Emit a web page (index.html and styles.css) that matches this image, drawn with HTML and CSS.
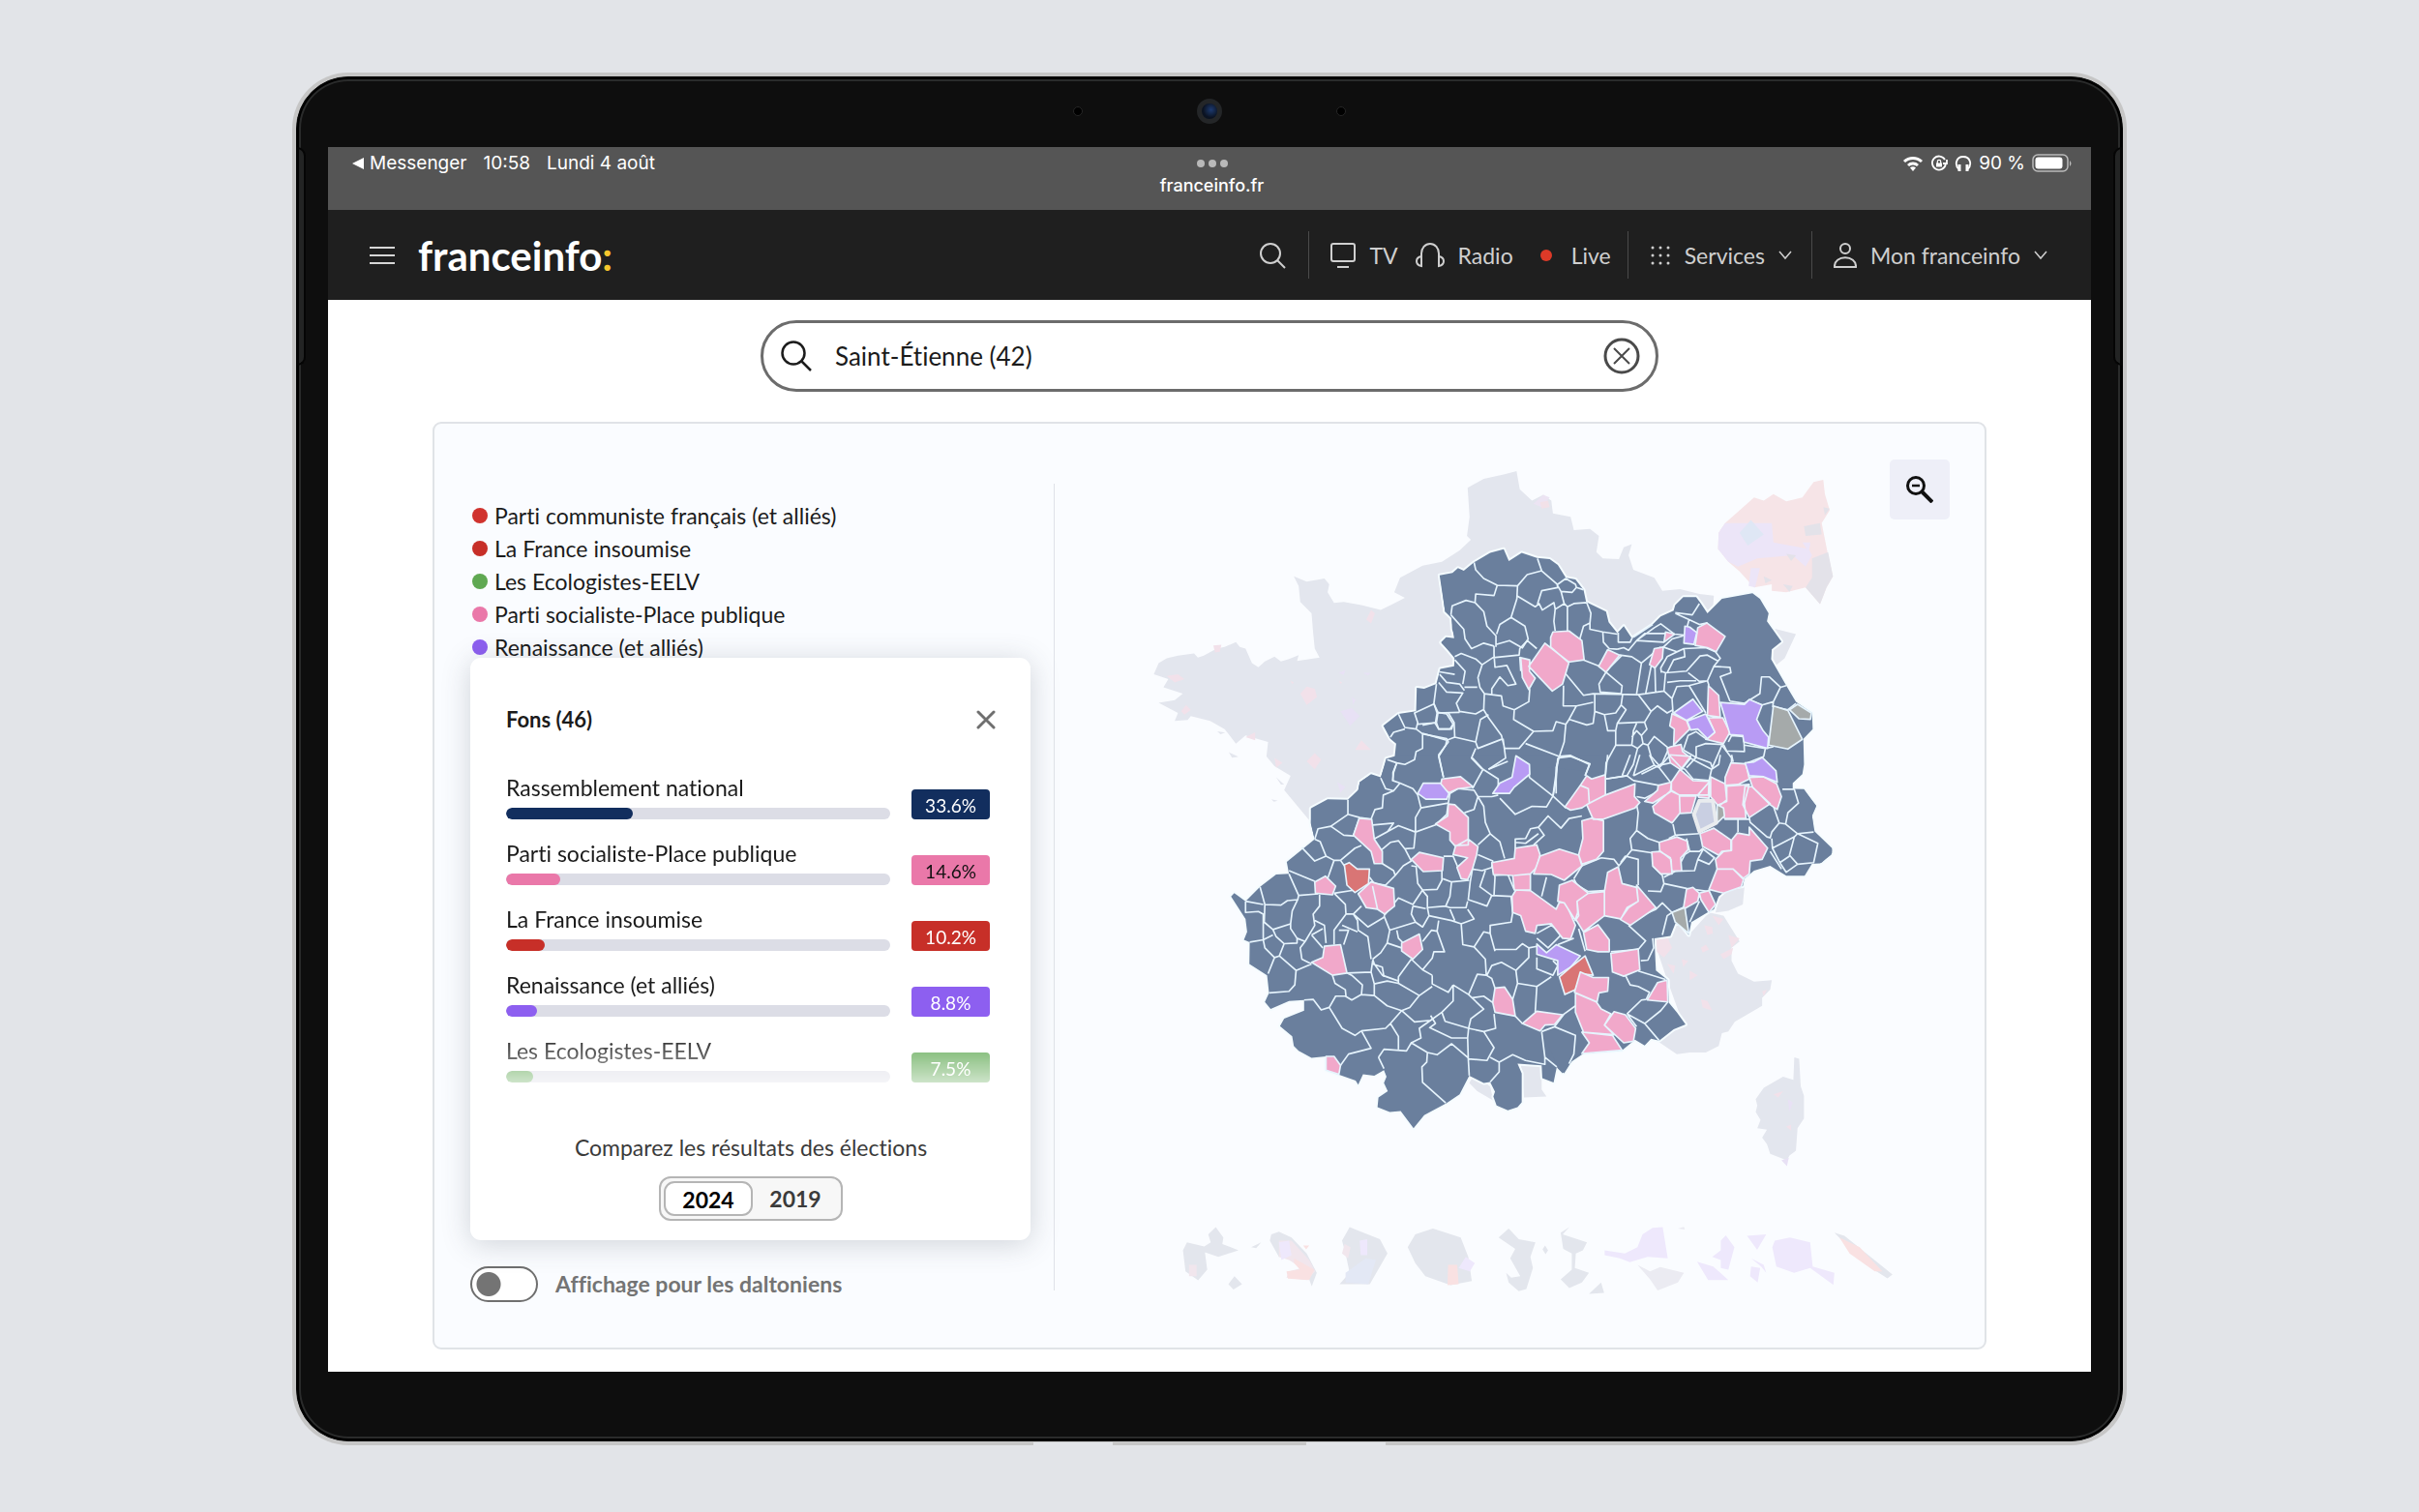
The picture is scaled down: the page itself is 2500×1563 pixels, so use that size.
FILE: index.html
```html
<!DOCTYPE html>
<html lang="fr">
<head>
<meta charset="utf-8">
<meta name="viewport" content="width=device-width, initial-scale=1">
<title>franceinfo - résultats des élections</title>
<link rel="stylesheet" href="styles.css">
</head>
<body>
<div class="tablet">
  <span class="edge edge-left"></span><span class="edge edge-right"></span>
  <span class="seam seam-left"></span><span class="seam seam-right"></span>
  <div class="bezel"><i class="mic"></i><i class="camera"></i><i class="mic"></i></div>
  <div class="screen">
    <div class="status">
      <div class="status-left">
        <svg width="13" height="14" viewBox="0 0 13 14"><path d="M13 1v12L1 7z" fill="#fff"/></svg>
        <span class="back">Messenger</span><span class="time">10:58</span><span>Lundi 4 août</span>
      </div>
      <div class="status-mid"><svg width="34" height="10" viewBox="0 0 34 10" fill="#b9b9b9"><circle cx="5" cy="5" r="4"/><circle cx="17" cy="5" r="4"/><circle cx="29" cy="5" r="4"/></svg><span>franceinfo.fr</span></div>
      <div class="status-right">
        <svg width="22" height="18" viewBox="0 0 22 18" fill="none" stroke="#fff" stroke-width="3"><path d="M2 7a13 13 0 0 1 18 0M6 11a7.500 7.500 0 0 1 10 0"/><path d="M8 13.500a4 4 0 0 1 6 0L11 17z" fill="#fff" stroke="none"/></svg>
        <svg width="18" height="18" viewBox="0 0 18 18" fill="none" stroke="#fff" stroke-width="1.800"><path d="M15 5a7 7 0 1 0 .8 5M17 5v4h-4"/><path d="M6 8.500h6v4H6z" fill="#fff" stroke="none"/><path d="M7.300 9V7a1.700 1.700 0 0 1 3.400 0v2" stroke-width="1.200"/></svg>
        <svg width="18" height="18" viewBox="0 0 18 18" fill="none" stroke="#fff" stroke-width="1.800"><path d="M4.500 15C0 11 1 2 9 2s9 9 4.500 13"/><path d="M5 10v7M13 10v7" stroke-width="3"/></svg>
        <span>90 %</span>
        <svg width="42" height="20" viewBox="0 0 42 20"><rect x="1" y="1" width="36" height="17" rx="5" fill="none" stroke="#bbb" stroke-width="1.500"/><rect x="3.500" y="3.500" width="28" height="12" rx="3" fill="#fff"/><path d="M39 7v6q3-3 0-6" fill="#bbb"/></svg>
      </div>
    </div>
    <header class="nav">
      <button class="plain menu" aria-label="Menu"><svg width="26" height="20" viewBox="0 0 26 20" stroke="#d6d6d6" stroke-width="2"><path d="M0 2h26M0 10h26M0 18h26"/></svg></button>
      <a class="logo" href="#">franceinfo<span>:</span></a>
      <nav class="links">
        <button class="plain find" aria-label="Rechercher"><svg width="28" height="28" viewBox="0 0 28 28" fill="none" stroke="#cfcfcf" stroke-width="2"><circle cx="12" cy="12" r="10"/><path d="M19 19l8 8"/></svg></button>
        <div class="group media">
          <a class="tv" href="#"><svg width="26" height="28" viewBox="0 0 26 28" fill="none" stroke="#cfcfcf" stroke-width="2"><rect x="1" y="2" width="24" height="18" rx="2"/><path d="M7 26h12"/></svg>TV</a>
          <a class="radio" href="#"><svg width="30" height="28" viewBox="0 0 30 28" fill="none" stroke="#cfcfcf" stroke-width="2"><path d="M6 25V12a9 10 0 0 1 18 0v13"/><path d="M6 15q-5 1-5 5t5 5zM24 15q5 1 5 5t-5 5z"/></svg>Radio</a>
          <a class="live" href="#"><i></i>Live</a>
        </div>
        <div class="group services"><a href="#"><svg width="22" height="22" viewBox="0 0 22 22" stroke="#cfcfcf" stroke-width="3" stroke-linecap="round"><path d="M3 3h0M11 3h0M19 3h0M3 11h0M11 11h0M19 11h0M3 19h0M11 19h0M19 19h0"/></svg>Services<svg class="chev" width="14" height="10" viewBox="0 0 14 10" fill="none" stroke="#cfcfcf" stroke-width="1.500"><path d="M1 1l6 7 6-7"/></svg></a></div>
        <div class="group account"><a href="#"><svg width="24" height="26" viewBox="0 0 24 26" fill="none" stroke="#cfcfcf" stroke-width="2"><circle cx="12" cy="6" r="5"/><path d="M1 25c-1-13 23-13 22 0z"/></svg>Mon franceinfo<svg class="chev" width="14" height="10" viewBox="0 0 14 10" fill="none" stroke="#cfcfcf" stroke-width="1.500"><path d="M1 1l6 7 6-7"/></svg></a></div>
      </nav>
    </header>
    <main>
      <form class="search">
        <svg width="32" height="32" viewBox="0 0 32 32" fill="none" stroke="#1c1c1c" stroke-width="2.500"><circle cx="13" cy="13" r="11.500"/><path d="M21 21l10 10"/></svg>
        <input type="text" aria-label="Commune" value="Saint-Étienne (42)">
        <button type="button" class="plain" aria-label="Effacer"><svg width="38" height="38" viewBox="0 0 38 38" fill="none" stroke="#4a4a4a" stroke-width="3"><circle cx="19" cy="19" r="17"/><path d="M11 11l16 16M27 11L11 27" stroke-width="2"/></svg></button>
      </form>
      <section class="card">
        <div class="side">
          <ul class="legend">
            <li class="pcf">Parti communiste français (et alliés)</li>
            <li class="lfi">La France insoumise</li>
            <li class="eco">Les Ecologistes-EELV</li>
            <li class="ps">Parti socialiste-Place publique</li>
            <li class="ren">Renaissance (et alliés)</li>
          </ul>
          <div class="popup">
            <div class="popup-head"><h2>Fons (46)</h2><button class="plain" aria-label="Fermer"><svg width="20" height="20" viewBox="0 0 20 20" stroke="#6f6f6f" stroke-width="3" stroke-linecap="round"><path d="M2 2l16 16M18 2L2 18"/></svg></button></div>
            <ul class="results">
              <li class="rn"><div><p>Rassemblement national</p><div class="bar"><span style="width:33.1%"></span></div></div><b>33.6%</b></li>
              <li class="ps"><div><p>Parti socialiste-Place publique</p><div class="bar"><span style="width:14.1%"></span></div></div><b>14.6%</b></li>
              <li class="lfi"><div><p>La France insoumise</p><div class="bar"><span style="width:10.2%"></span></div></div><b>10.2%</b></li>
              <li class="ren"><div><p>Renaissance (et alliés)</p><div class="bar"><span style="width:8%"></span></div></div><b>8.8%</b></li>
              <li class="eco"><div><p>Les Ecologistes-EELV</p><div class="bar"><span style="width:7%"></span></div></div><b>7.5%</b></li>
            </ul>
            <p class="compare">Comparez les résultats des élections</p>
            <div class="years"><button class="on">2024</button><button>2019</button></div>
          </div>
          <label class="switch"><input type="checkbox"><span>Affichage pour les daltoniens</span></label>
        </div>
        <div class="map">
          <svg viewBox="1089 437 963 957" role="img" aria-label="Carte de France des résultats">
            <defs>
              <g id="zone">
                <path transform="translate(1150 440) scale(.33333)" d="M1015 463 1030 575 1050 595 1058 658 1035 655 1018 672 1060 715 1058 745 1015 753 1003 800 965 815 942 812 940 885 885 893 838 930 860 970 878 985 872 1040 848 1035 830 1090 800 1080 765 1105 760 1130 730 1160 613 1187 613 1230 625 1285 1260 1285 1260 480Z"/>
                <path transform="translate(1470 460) scale(.33333)" d="M53 402 93 395 110 380 128 388 160 362 210 332 252 321 268 358 308 332 355 348 395 352 420 370 445 410 475 415 500 447 508 485 570 515 578 548 605 582 625 560 650 598 715 555 740 530 780 512 785 495 810 470 850 470 865 490 885 520 930 475 1025 458 1048 475 1075 520 1070 545 1115 608 1085 632 1083 663 1130 745 1160 795 1210 830 1212 880 1183 910 1185 990 1180 1020 1150 1048 1150 1068 1185 1070 1223 1118 1210 1145 1215 1200 1272 1255 1270 1270 1235 1297 1000 1297 980 1320 100 1320 100 660 58 610 73 595 102 602 92 570 90 530 70 515Z"/>
                <path transform="translate(1240 780) scale(.33333)" d="M577 12 560 72 530 62 495 85 490 110 458 140 395 138 345 165 343 215 355 262 268 333 275 370 235 372 185 410 140 455 105 430 95 440 140 510 145 550 135 575 153 582 152 650 207 685 213 740 200 768 218 790 275 765 322 762 322 795 260 820 247 843 285 875 290 905 305 920 345 942 390 937 390 980 433 995 482 1012 490 1025 505 993 540 997 570 980 578 1000 570 1020 582 1045 553 1065 550 1095 588 1110 622 1107 662 1160 695 1120 765 1082 805 1055 835 997 880 1020 900 1017 915 1047 910 1062 920 1090 955 1105 985 1095 998 1080 998 990 985 960 1060 965 1062 1005 1097 1018 1107 970 1130 990 1155 950 1187 925 1260 890 1260 0 620 0Z"/>
                <path transform="translate(1600 780) scale(.33333)" d="M0 40 730 105 795 107 833 160 820 190 828 238 882 290 882 305 850 335 820 338 797 376 740 376 690 345 640 360 610 385 605 408 560 415 530 440 515 480 495 490 445 520 437 560 410 525 395 525 380 563 330 570 335 670 372 700 375 770 400 800 427 838 390 853 345 888 320 882 300 903 270 885 230 918 110 928 70 955 45 990 30 975 0 900Z"/>
              </g>
            </defs>
            <g class="faint">
              <path transform="translate(1150 440) scale(.33333)" d="M125 770 140 735 165 720 200 712 250 705 262 718 280 712 320 690 345 685 380 670 392 685 410 690 430 735 450 748 470 730 500 715 520 730 545 722 575 710 570 728 640 718 625 690 620 640 615 580 580 545 575 495 560 465 600 482 655 472 670 490 665 515 685 548 715 545 770 555 830 570 870 550 905 532 872 515 890 470 960 432 1020 420 1075 385 1110 352 1098 340 1106 280 1100 190 1150 162 1215 148 1252 138 1262 195 1300 230 1335 212 1360 230 1365 270 1420 280 1430 322 1480 318 1508 340 1500 390 1520 410 1570 412 1585 375 1610 365 1600 400 1615 445 1680 470 1705 510 1760 505 1820 520 1865 525 1860 600 1650 720 1000 1100 607 1222 580 1190 530 1130 550 1085 500 1055 475 1025 480 980 410 960 380 985 345 940 300 915 240 900 230 912 190 915 200 890 140 858 190 850 215 830 155 810 170 785Z M2055 628 2120 645 2085 720 2058 742 2040 725Z M322 947l25 4-15 5ZM358 1012l30 14-20 3ZM505 1090l25 22-10 0ZM490 1158l20 5-12 3Z"/>
              <path transform="translate(1600 780) scale(.33333)" d="M325 565 410 515 437 560 500 490 545 500 595 580 570 600 570 640 590 680 640 705 695 700 690 730 665 755 665 780 580 830 560 860 540 865 530 905 490 925 440 925 400 930 340 890 420 838 370 700ZM520 490 530 450 560 412 610 410 605 465 560 485ZM765 940 780 945 785 1030 795 1060 795 1130 775 1160 770 1230 750 1245 742 1260 690 1240 680 1210 665 1190 680 1165 650 1160 660 1135 645 1110 650 1090 645 1070 670 1035 730 1000 762 1010ZM-230 995-180 1030-170 1075-220 1045-245 1020ZM-85 960-20 965-20 1040-5 1062-75 1065Z"/>
            </g>
            <g class="tint">
              <path class="tp" transform="translate(1150 440) scale(.33333)" d="M785 600 800 570 812 580 800 612ZM310 680 335 678 330 700 315 702ZM165 775 200 770 220 785 190 795ZM225 865 240 880 220 895 210 885ZM580 830 600 808 625 815 632 840 600 865ZM410 965 440 950 440 975ZM500 1030 525 1045 505 1060ZM600 1040 625 1015 645 1035 625 1065ZM750 1005 770 975 800 1005ZM550 790l10 5-5 5ZM700 790l10 5-5 5Z"/>
              <path class="tv2" transform="translate(1150 440) scale(.33333)" d="M705 885 740 875 765 900 735 930ZM695 1105 720 1120 705 1138ZM740 840l12 10-8 14ZM700 765l20-8-5 15ZM775 765l25 0-10 8Z"/>
              <path class="tp" transform="translate(1600 780) scale(.33333)" d="M335 575 370 565 385 600 360 630 335 610ZM485 530 510 535 512 555 495 560ZM510 500 545 510 530 530ZM560 560 595 570 570 600ZM535 620 575 600 570 620 545 635ZM475 600 490 590 500 605 480 615ZM415 635 435 640 420 660ZM440 670 465 685 440 700ZM475 760 495 765 510 795 480 785ZM700 1055 730 1045 715 1065ZM370 650l25 5-5 25ZM665 735l15-5-10 20ZM740 1155l15-5 0 18Z"/>
              <path class="tv2" transform="translate(1600 780) scale(.33333)" d="M725 1260 748 1252 742 1278ZM745 1070l15 10-10 30Z"/>
              <g transform="translate(1470 460) scale(.33333)">
                <path fill="#f6e4e7" d="M940 240 985 200 1030 160 1060 170 1090 150 1130 172 1180 160 1215 112 1245 105 1250 150 1265 200 1240 240 1258 330 1275 405 1255 440 1235 492 1190 440 1130 455 1085 450 1085 430 1030 440 985 390 950 360 918 320 920 270Z"/>
                <path fill="#ece5f8" d="M920 270 940 240 1085 240 1090 300 1200 320 1210 340 1190 375 1150 340 1040 350 980 375 950 360 918 320ZM1020 380l28 0-15 60-20-5ZM1180 300l25 0-5 30Z"/>
                <path fill="#dfe7f5" d="M985 270l35-40 40 45-50 35Z"/>
                <path fill="#e3e2e9" d="M1185 250l50-10 5 35-50 5ZM1245 190l20 5-15 20ZM1210 350l50-20 15 75-20 35-20 52-45-52 20-30ZM1130 335l30 5-15 18ZM1120 430l30 5-10 18ZM1060 405l25 12-20 10Z"/>
                <path fill="#ece4f3" d="M345 180 375 152 395 160 370 190Z"/>
                <path fill="#f2e1e8" d="M365 175l25-5 5 20-25 5Z"/>
              </g>
              <g transform="translate(1180 1200) scale(.523 .33333)">
                <path fill="#e3e6ed" d="M88 255 122 268 128 340 110 373 85 345 80 280ZM145 208 160 240 158 260 190 280 150 300 122 285 120 270 135 255 130 230ZM182 360 197 385 180 402 170 385ZM215 270l20-15-10 18ZM255 230 270 222 295 240 325 290 345 350 335 392 330 370 300 300 270 300 252 250ZM410 208 470 245 485 290 450 385 390 385 410 350 402 290 395 250ZM575 212 630 240 645 300 652 375 610 388 560 360 540 320 525 270 540 230ZM725 212 745 245 778 255 768 300 773 335 760 400 745 407 725 380 720 350 730 365 748 360 728 305 738 275 705 240ZM797 265l6 15-5 12-6-15ZM845 208 832 230 880 255 872 280 858 290 856 335 884 350 870 380 845 397 828 370 850 340 850 290 833 275 828 225ZM908 380 914 412 884 415ZM1370 225l20 10 95 120-10 12-45-45Z"/>
                <path fill="#f1e6ed" d="M92 325h15v35H92ZM270 250 295 250 330 310 342 345 325 372 285 365 290 345 315 335 290 310 270 300ZM400 260l12 10-5 35-12-15Z"/>
                <path fill="#f9e1e2" d="M300 305 340 340 330 372 288 368 285 345 312 340 300 320ZM605 325h18l3 60-22 3ZM1380 240 1420 270 1465 345 1450 345 1400 290ZM318 265h12l-6 12Z"/>
                <path fill="#eee8fc" d="M270 255l20-5 5 45-20 15ZM430 250l15-5v50h-13ZM640 300l18 20-10 25-22-10ZM1030 208 1040 305 1000 300 965 317 945 305 915 295 915 280 955 290 980 270 990 230 1010 210ZM1155 233 1172 270 1160 340 1145 335 1145 310 1128 300 1145 280 1145 250ZM1098 315 1130 330 1160 372 1120 372ZM1197 235l38-5-18 48ZM1252 250 1282 240 1322 255 1327 330 1370 350 1368 387 1322 335 1290 350 1255 330 1247 270ZM1205 330l18 5-5 45-15-20ZM1195 325l10-3ZM1205 305l25 20 5 25-10-20Z"/>
                <path fill="#ebebf2" d="M980 325 1005 345 1025 332 1072 350 1060 380 1020 405 1005 370ZM1060 212l12-5 2 8Z"/>
                <path fill="#e3e8f5" d="M402 350l40-45 20 5-15 75-45-5Z"/>
              </g>
            </g>
            <use href="#zone" class="halo"/><use href="#zone" class="solid"/>
            <g transform="translate(1150 440) scale(.33333)" class="lines"><path d="M885 893 905 935 940 940 945 920 935 890 995 862 1003 800M860 965 870 950 905 940M940 940 960 955 960 1000 940 1010 935 1035 905 1050 880 1045 850 1035M995 862 1008 888 1003 920 945 925M1008 888 1035 893 1055 925 1050 940 1010 940 1003 920M960 955 1035 970 1040 980 1010 1020 1025 1090M880 1045 868 1075 868 1100"/></g>
            <g transform="translate(1470 460) scale(.33333)" class="lines">
              <path d="M160 362 165 385 190 412 232 433 295 435 325 400 370 388 357 350M232 433 222 465 165 460 163 487M88 525 92 497 135 480 163 487 190 515 200 560 228 590 228 625M88 525 128 570 132 600 152 630 190 613 222 622M295 435 293 475 275 533 240 555 230 585M275 533 318 560 328 600 310 628 270 605 228 617M295 467 350 500 362 490 372 510 408 487 412 507 408 545 412 575M357 492 370 450 420 440 418 430 370 388M420 430 445 412 475 430 478 440 465 455 430 452 420 435M430 452 440 490 413 507M440 490 450 500 450 575M450 500 470 490 510 487M478 440 500 447M510 487 523 520 520 550 500 560 487 605M520 550 520 570 560 578 605 585M560 578 562 610 580 630 605 632M608 580 608 610 645 610 652 595M605 632 625 627 640 635 665 605 720 565 740 553 783 585 815 588 828 540 785 520M665 605 690 583 755 583M750 610 665 605M655 595 715 555M612 650 650 655 680 675 740 625M500 665 550 685 570 703 620 745 617 770 552 765 548 740 570 703M620 650 585 685 570 703M442 705 500 775 530 770 670 773 750 762 755 705M680 675 665 770M710 685 693 770M722 690 724 765M740 700 755 705 820 700 862 653 885 650 920 670M742 705 740 690 760 655 812 630 880 627 910 640 925 660 905 685 885 730 860 732 825 705M760 735 800 730 850 730M748 625 790 640 812 630 815 655 780 665 760 705M810 590 775 600 745 628M828 540 860 555 885 550M860 490 838 525 785 518M905 685 955 688 958 705 925 717 955 793M890 745 885 730 828 745 880 830M828 745 790 748 775 785 778 830M750 762 775 785M955 793 1000 800 1048 770 1053 718 1078 718 1112 750 1090 795 1055 805 1015 790M1112 750 1130 745M1090 795 1088 810 1135 820 1160 800M950 920 960 900 998 903 1000 950 945 948 935 928M1000 930 1065 940 1090 935M1065 940 1060 965 1010 985"/>
              <path d="M100 655 120 645 165 662 185 680 172 720 178 750 192 770M185 680 218 658 300 650 302 630 325 605 355 630M222 622 222 650 225 688 262 682 290 740 265 745 240 718 215 755 215 775M192 770 245 777 250 808 285 820 330 795 333 755M302 655 305 700M285 820 283 850 345 887 405 885 415 857 445 865M192 770 190 820 205 845 245 900 255 940 300 940 345 887M438 745 437 808 478 808 530 797M478 808 455 850 445 865 440 920 425 965 320 925M535 770 535 825 530 862 510 867 457 850M535 825 565 835 575 885 600 885 600 930 570 985 568 1025M565 835 600 830 617 805 622 770M617 805 632 820 605 862 600 885M605 862 690 858 710 825 670 773M710 825 730 808 760 830 778 820M600 930 650 930 655 885 665 862M650 930 668 940 685 925 680 900 665 885 650 905M690 860 697 880 680 900M685 925 700 930 720 903 765 940 745 985 735 993 710 965 700 930M668 940 655 990 635 1025 568 1035M735 993 680 1020M735 993 770 985M53 710 75 735 115 740 130 760M50 735 75 765 125 768 105 800 115 825M53 702 100 710M100 665 132 700 125 740M130 750 170 750M115 825 165 833 188 820M35 800 45 830 115 828M45 830 40 860 0 868M80 830 98 860 85 880 50 880 38 860M98 860 100 905 165 920 180 850 205 835M0 893 75 915 100 905M75 915 72 930 50 965 65 1030M165 920 172 940 250 910M165 940 152 970 185 1005M250 910 258 970 205 1005M425 965 415 1000 415 1080M425 965 460 962 518 990 505 1025M810 945 825 900 850 888 880 910M810 945 850 968 850 935 880 925 935 928M850 968 895 985 900 1000 930 930 960 970 960 985M850 968 820 1000"/>
            </g>
            <g transform="translate(1240 780) scale(.33333)" class="lines">
              <path d="M610 25 600 55 597 80 620 88M560 72 575 105 600 112 620 88 660 105 675 125 685 165 668 195 668 238M600 112 568 125 565 165 542 170 530 200M458 140 458 185 495 195 530 200M458 185 405 222 365 230 355 262M405 222 445 250 475 252 493 200M355 262 372 270 390 315 355 330 315 288M390 315 415 328 435 328 480 290 500 282M415 328 395 385M435 328 447 345M275 360 355 393M535 218 600 212 580 240 538 262M538 262 615 220 668 240M563 295 590 272 615 267 635 292 663 290 668 240 730 218 765 185 770 150 685 165M635 292 655 330 630 345 605 375M565 338 600 360 605 375 575 405 540 400 525 380M655 345 670 347 675 400 690 420 660 465 615 445 570 500M750 360 750 390 735 418 690 420M770 150 775 120 800 105 850 110 862 130 850 170 820 180M862 130 880 160 885 210 900 245 862 280M900 245 930 270 945 322M862 130 905 130 925 125M845 105 878 45 845 10M878 45 925 75 925 95M895 45 955 20M930 135 978 185 1030 160 1075 162 1095 128 1022 70 1020 35M1095 128 1110 20M1095 128 1135 165M978 290 978 262 1010 260 1025 230 1050 225 1080 190 1120 228 1145 198 1185 190M1050 225 1068 250 1035 280M978 272 1010 275 1050 245M862 310 908 330 905 350 875 360 845 355M845 355 838 395 832 450 890 470 905 437 868 410 885 360M908 355 915 380 912 435M905 437 965 440 970 490 965 520 900 530 900 555 915 610M915 375 955 372 975 420M755 315 785 315 800 350M753 385 780 395 835 390M780 395 775 440 762 470 705 475 705 440 690 422M830 455 825 475 775 475 760 470M705 475 710 500 780 515 810 525 850 510 830 480M775 480 790 515M660 470 700 478M660 470 655 495 668 520 588 545M668 520 690 535 710 500M740 515 735 548 758 612 725 612 720 632 690 668M690 580 718 545 735 548M588 545 580 585 560 615 535 635M570 500 588 545M610 545 615 570 630 585M580 585 625 600M810 525 815 590 850 597 880 550 900 555M850 597 885 635 888 685 905 695 915 725M915 605 980 605 1000 587 1020 600 1020 630 980 670 935 645 905 655 890 685M980 670 985 710 1045 720 1090 690M985 710 970 760M1045 720 1040 800M888 685 860 682 833 745 785 715M720 685 720 712 770 738 785 715M655 635 690 668 720 685M655 635 615 690 615 710 680 748 720 720M535 635 540 650 565 685 615 703M535 650 565 660 570 690M680 748 650 785 625 795 590 835 575 850 500 858M625 795 665 830 715 825 750 800 785 765 785 715M833 745 880 790 840 820 833 850 760 828 750 800M715 810 730 835 712 848 780 880 830 880M715 825 680 850 685 880 655 895M590 835 615 875 615 915M500 858 530 912 460 930 433 968M553 940 570 915 640 920 655 895 705 925 735 932 780 898 832 942M705 925 703 955 688 970 690 1018 762 1082M553 940 570 975M833 850 830 880 832 945 835 997M833 850 880 860 912 910 890 950 832 945M880 860 917 850 912 805M908 770 880 750 845 755M900 940 928 955 928 985 900 1017M928 955 970 932 1010 950 1070 962 1070 940 1060 860M1070 940 1107 970M1060 860 1100 845 1165 872 1160 930 1145 960M1100 845 1130 805 1165 780M978 812 1000 835"/>
              <path d="M400 785 440 850 480 872 500 858M322 762 350 760 375 793 400 785 420 750 450 750 470 762 500 745 540 748 580 780 625 795M540 748 540 712 580 703 615 710M540 712 530 675 455 678M530 675 535 640M500 745 503 715 470 685 455 678M410 685 418 710 450 730 452 750M185 410 200 465 250 467 270 453 302 450 305 437 275 370M140 455 140 490 180 487 195 495 195 575 153 582M200 465 198 520 225 543 280 525 285 485 302 450M225 543 235 565 260 587 300 585 300 570 280 540 280 525M260 587 245 625 230 630 200 600 195 575 225 560M245 625 297 670 293 715 275 735 213 740M230 630 210 680M297 670 345 650M305 437 365 432M370 435 370 470 350 495 355 530 325 580 300 570M355 515 385 530 390 585M325 580 310 600 315 635 345 650M345 560 380 600M345 560 380 540M415 430 450 465 452 495 415 545 415 590M415 430 480 420M475 495 452 495M475 495 488 515 490 545 520 565 530 635M440 530 488 550M445 590 460 545 430 545M500 470 475 495 520 535 570 505M1075 380 1060 440M1045 555 1090 530 1125 555 1080 600 1045 570M1020 600 1045 595M1045 630 1045 665 1095 685 1110 655 1095 640M1110 590 1160 570M195 465 140 455"/>
            </g>
            <g transform="translate(1600 780) scale(.33333)" class="lines"><path d="M30 10 25 75 15 130M30 10 70 5 130 28 115 65M185 0 178 65 178 125M180 75 245 65 265 80M265 65 285 0M230 65 255 0M265 80 345 95 340 115 300 135 275 130M265 65 330 32 345 40 380 85M330 32 315 0M345 40 375 5M410 40 425 45 450 75 500 80 508 45 440 10M508 45 530 30 535 0M570 0 575 22M728 107 765 107 778 150 745 180 738 215 718 212M738 215 775 245 825 240M775 245 765 255 750 312 775 340 825 335 838 275 775 245M695 260 697 290 720 335 750 315M690 258 695 240 718 212 700 160M697 290 765 255M720 335 740 365 775 340M690 300 725 355M625 195 628 210 680 255 692 258M548 200 625 200M590 200 590 240M270 130 280 180 275 235 255 260 260 295 220 345 205 325 165 320M275 235 310 260 345 272M260 295 325 305M225 335 240 315 280 325 280 405M325 345 355 375 360 400 350 425 310 423M360 380 395 362 455 360 465 325 500 340 517 320 482 293 465 325M360 400 430 415 500 425M440 300 425 310 412 335M430 260 440 300 470 300 482 290M388 215 395 250 470 245M395 250 375 260M80 385 90 405 125 425 175 422M80 385 105 345M165 320 105 345M250 530 290 500 335 480 355 460 385 490 370 500 355 560M385 490 430 470M250 530 303 578 280 605 195 612M325 570 328 600 310 638 288 640M240 685 255 715 280 720 315 738 305 760M365 698 280 672M245 805 290 762 305 760M245 805 300 835 350 795 372 768M300 835 345 888M245 805 275 845M95 540 115 610M440 520 470 455"/></g>
            <g transform="translate(1470 460) scale(.33333)" class="areas">
              <path class="pk" d="M398 595 405 578 455 575 495 605 502 665 452 672 398 625ZM380 613 455 672 435 740 403 762 330 685ZM305 658 333 665 332 700 350 722 330 757 310 720ZM575 633 612 650 570 703 547 685ZM720 630 748 625 745 660 722 690 705 680ZM750 610 755 578 783 585ZM855 565 883 550 940 592 912 640 885 627 847 620ZM888 745 920 775 925 843 885 838ZM888 845 933 845 955 890 935 925 880 912 908 890ZM775 832 820 853 830 880 780 930 782 880 768 870ZM770 935 803 928 808 950 833 970 803 1007 770 985 760 940Z"/>
              <path class="pu" d="M815 560 830 563 852 580 843 617 812 613ZM780 830 840 787 870 825 820 853ZM822 855 880 833 908 890 885 910 855 880 833 883ZM925 797 1000 803 1015 788 1055 805 1038 850 1058 885 1075 905 1072 940 998 920 995 900 955 897ZM290 963 332 990 333 1020 285 1060 270 1080 218 1080 240 1048 278 1030Z"/>
              <path class="gr" d="M1090 808 1135 822 1180 912 1135 942 1075 930ZM1140 820 1165 803 1208 830 1205 850 1170 848Z"/>
            </g>
            <g transform="translate(1240 780) scale(.33333)" class="areas">
              <path class="pk" d="M750 75 808 68 848 100 800 105 772 118 745 98ZM770 153 790 155 832 195 832 280 790 282 775 265 775 240 730 215 768 190ZM832 262 862 285 858 310 845 355 830 388 810 385 797 350 830 320 785 310 792 285ZM493 197 532 200 540 262 565 300 565 338 540 338 530 300 475 250ZM655 325 680 303 755 320 752 360 692 363ZM355 395 388 377 420 408 410 435 357 430ZM490 432 530 395 600 415 603 470 572 495 550 480 515 475ZM535 410 550 480ZM385 595 435 590 443 625 455 678 410 685 345 645 380 630ZM625 585 680 557 690 605 660 635 625 610ZM915 725 945 722 970 760 978 812 915 800 908 770ZM1000 835 1045 797 1125 808 1100 838 1070 840 1055 858ZM390 937 415 937 435 965 430 993 390 980ZM905 335 975 322 978 290 1045 280 1055 310 1045 350 1025 370 1025 420 975 420 970 375 910 372ZM980 420 1025 422 1105 480 1115 458 1135 460 1165 530 1150 572 1125 570 1090 525 1045 530 1040 555 1010 548 995 500 970 490 968 440ZM975 375 1025 370Z"/>
              <path class="pu" d="M675 120 692 88 745 88 772 120 765 138 700 138ZM1045 588 1075 615 1105 590 1180 625 1150 660 1110 685 1110 640 1045 620Z"/>
              <path class="rd" d="M447 342 462 335 487 355 525 355 522 400 480 428 455 405ZM1115 690 1150 660 1195 625 1220 685 1183 680 1165 730 1132 745Z"/>
            </g>
            <g transform="translate(1600 780) scale(.33333)" class="areas">
              <path class="pk" d="M52 162 100 95 125 105 128 150 105 165 70 172ZM100 95 120 65 135 75 178 62 178 125 128 150 125 105ZM120 155 178 125 270 90 268 130 285 148 270 165 172 200 140 200ZM105 205 135 197 172 205 172 300 150 325 105 340 95 310 108 260ZM300 145 340 110 342 95 383 85 380 115 325 150ZM325 160 380 112 408 125 410 180 385 212 330 180ZM410 45 450 80 500 82 498 125 408 125 383 110 383 85ZM375 0 443 5 415 42ZM408 128 460 128 445 180 410 182ZM465 125 500 85 500 135 468 132ZM505 68 550 90 555 140 530 160 505 130ZM550 70 568 25 615 28 625 75 590 92 550 95ZM555 97 625 92 610 150 615 198 548 197 530 155 555 145ZM625 70 670 68 710 90 725 130 712 170 690 155 635 100ZM612 97 635 100 690 152 625 195 605 155ZM472 245 515 228 568 265 568 297 540 300 530 312 480 285ZM570 265 588 243 625 250 625 225 682 290 665 325 628 330 625 370 605 385 575 355 525 355 520 325 545 300 570 297ZM525 355 575 355 608 385 600 410 545 430 500 418ZM345 272 400 255 432 268 435 295 412 320 415 360 385 362 380 320 347 300ZM322 302 350 300 382 325 385 370 350 370 325 345ZM-25 315 35 293 95 312 105 345 50 390 10 372-45 370ZM35 405 75 390 125 430 90 455 95 500 85 515 50 460 30 455ZM90 455 125 430 175 425 175 500 110 550 85 510 92 490ZM175 425 185 365 218 348 230 400 275 412 280 455 250 475 225 510 175 500ZM275 405 335 475 255 530 225 512 245 475 280 455ZM110 552 155 528 190 575 190 612 155 612 120 605ZM195 617 280 603 285 668 235 688 200 675ZM100 675 140 692 188 692 185 735 158 740 152 768 82 738ZM85 740 150 768 165 790 195 805 175 840 205 870 110 862 85 800ZM205 798 240 808 272 850 265 890 235 895 175 840ZM105 862 200 872 230 918 105 928 128 895ZM370 700 372 768 308 762 340 708ZM430 418 450 412 470 430 465 455 420 480ZM470 430 500 422 520 465 500 490 475 450Z"/>
              <path class="pu" d="M612 25 640 22 665 8 708 50 712 85 670 68 625 65Z"/>
              <path class="gr" d="M525 155 545 165 548 190 525 212ZM385 490 425 475 437 555 395 520Z"/>
              <path class="picked" d="M470 143 512 143 522 212 470 238 453 185Z"/>
            </g>
          </svg>
          <button class="zoom-out" aria-label="Dézoomer"><svg width="28" height="28" viewBox="0 0 28 28" fill="none" stroke="#111" stroke-width="3"><circle cx="10" cy="10" r="8.500"/><path d="M16 16l11 11" stroke-width="4"/><path d="M6 10h8" stroke-width="2.500"/></svg></button>
        </div>
      </section>
    </main>
  </div>
</div>
</body>
</html>
```
FILE: styles.css
```css
* { box-sizing: border-box; }
body { margin: 0; min-height: 100vh; padding: 79px 12.24% 72px; background: #e2e4e8; font-family: Lato, "Open Sans", sans-serif; font-size: 23px; font-variant-ligatures: none; color: #1b1b1b; }
p, h2, ul { margin: 0; padding: 0; }
ul { list-style: none; }
a { color: inherit; text-decoration: none; }
.plain { border: 0; padding: 0; background: none; display: flex; }
svg { display: block; flex: none; }

.tablet { position: relative; padding: 0 32px 71px; border-radius: 54px; background: #0e0e0e; border: 1px solid #000; box-shadow: inset 0 0 0 2px #000, inset 0 0 0 4px #2a2b2b, 0 0 0 4px #c6c6c6; }
.edge { position: absolute; top: 72px; width: 9px; height: 226px; background: #232424; border: 2px solid #050505; }
.edge-left { left: 0; border-radius: 0 9px 9px 0; }
.edge-right { right: 0; border-radius: 9px 0 0 9px; }
.seam { position: absolute; top: 100%; width: 82px; height: 5px; margin-top: 2px; background: #e2e4e8; }
.seam-left { right: calc(50% + 100px); }
.seam-right { left: calc(50% + 100px); }
.bezel { height: 72px; padding-bottom: 2px; display: flex; justify-content: center; align-items: center; gap: 118px; }
.camera { width: 26px; height: 26px; border-radius: 50%; border: 5px solid #242628; background: radial-gradient(circle at 60% 40%, #1d3a70, #0b1322 60%); }
.mic { width: 10px; height: 10px; border-radius: 50%; background: #000; border: 1px solid #262626; }
.screen { background: #fff; overflow: hidden; }

.status { display: grid; grid-template-columns: 1fr auto 1fr; height: 65px; padding: 5px 19px 0 24px; background: #555; color: #fff; font: 400 19px/24px Inter, sans-serif; }
.status-left, .status-right { display: flex; align-items: center; height: 24px; }
.back { margin: 0 17px 0 6px; }
.time { margin-right: 17px; }
.status-mid { display: flex; flex-direction: column; align-items: center; gap: 5px; padding-top: 7px; font-size: 18px; font-weight: 500; line-height: 26px; }
.status-right { justify-content: flex-end; gap: 7px; }

.nav { display: flex; align-items: center; height: 93px; padding: 0 45px 0 43px; background: #1f1f1f; color: #cfcfcf; }
.logo { margin-left: 24px; font-size: 42px; font-weight: 700; line-height: 48px; color: #fff; }
.logo span { color: #f6c62d; }
.links { display: flex; align-items: center; margin-left: auto; line-height: 28px; }
.find { margin-right: 23px; }
.group { display: flex; align-items: center; height: 49px; padding-left: 22px; border-left: 1px solid #4a4a4a; }
.group a { display: flex; align-items: center; gap: 14px; }
.media { padding-right: 17px; gap: 18px; }
.services { padding-right: 20px; }
.live { margin-left: 10px; }
.live i { width: 12px; height: 12px; border-radius: 50%; background: #dd3a28; margin-right: 6px; }

main { padding: 21px 108px 23px; }
.search { display: flex; align-items: center; width: 928px; max-width: 100%; height: 74px; margin: 0 auto; padding: 0 16px 0 18px; border: 3px solid #6c6c6c; border-radius: 37px; background: #fff; }
.search input { flex: 1; min-width: 0; margin-left: 24px; border: 0; outline: 0; padding: 0; background: none; font: 26px/32px Lato, sans-serif; font-variant-ligatures: none; color: #1b1b1b; }
.card { display: grid; grid-template-columns: 641px 1fr; margin-top: 31px; border: 2px solid #e0e3e7; border-radius: 9px; background: #fafcff; }
.side { position: relative; padding: 78px 25px 0 37px; }
.side::after { content: ""; position: absolute; right: 0; top: 62px; bottom: 59px; border-right: 1px solid #dfe2e8; }
.legend li { display: flex; align-items: center; gap: 7px; height: 34px; padding-left: 2px; line-height: 30px; }
.legend li::before { content: ""; width: 16px; height: 16px; border-radius: 50%; background: var(--c); }
.pcf { --c: #d0332e; } .lfi { --c: #c72f28; } .eco { --c: #5fa852; } .ps { --c: #ea78a9; } .ren { --c: #8d5ff0; } .rn { --c: #122e5e; }
.popup { position: relative; height: 602px; margin-top: -6px; padding: 47px 36px 21px 37px; border-radius: 11px; background: #fff; box-shadow: 0 4px 30px rgba(60, 70, 80, .22); }
.popup-head { display: flex; align-items: center; justify-content: space-between; height: 34px; }
.popup h2 { font-size: 22px; line-height: 30px; }
.results { display: grid; gap: 18px; margin-top: 36px; padding-bottom: 24px; -webkit-mask-image: linear-gradient(#000 78%, transparent); mask-image: linear-gradient(#000 78%, transparent); }
.results li { display: grid; grid-template-columns: 1fr 81px; gap: 22px; height: 50px; align-items: end; padding-right: 6px; }
.results p { height: 36px; line-height: 30px; }
.bar { height: 12px; border-radius: 6px; background: #dcdde6; overflow: hidden; }
.bar span { display: block; height: 12px; border-radius: 6px; background: var(--c); }
.results b { height: 31px; border-radius: 4px; background: var(--c); color: #fff; text-align: center; font-size: 19px; font-weight: 400; line-height: 34px; }
.results .ps b { color: #111; }
.compare { margin-top: 28px; text-align: center; line-height: 30px; color: #3b3b3b; }
.years { display: flex; width: 190px; height: 46px; margin: 15px auto 0; padding: 3px; border: 2px solid #b5b5b5; border-radius: 12px; background: #f7f7f7; }
.years button { flex: 1; border: 0; border-radius: 11px; padding: 0; background: none; font: 700 23px/34px Lato, sans-serif; color: #3b3b3b; }
.years .on { border: 2px solid #b5b5b5; background: #fff; color: #000; }
.switch { display: flex; align-items: center; gap: 18px; height: 38px; margin-top: 26px; font-weight: 700; color: #747474; line-height: 30px; }
.switch input { appearance: none; width: 70px; height: 37px; margin: 0; border: 2px solid #6f6f6f; border-radius: 19px; background: radial-gradient(circle at 17px 50%, #747474 12px, #fff 13px); }
.map { position: relative; }
.map > svg { width: 100%; height: auto; }
.zoom-out { position: absolute; top: 37px; right: 36px; display: grid; place-items: center; width: 62px; height: 62px; border: 0; border-radius: 5px; background: #eeeff8; }

.faint { fill: #e3e6ee; }
.tp { fill: #f2e1ea; }
.tv2 { fill: #e8e1f5; }
.halo { fill: #f5fcff; stroke: #f5fcff; stroke-width: 12px; stroke-linejoin: round; }
.solid { fill: #6a7f9d; }
.lines { fill: none; stroke: #e6f4fd; stroke-width: 5px; stroke-linejoin: round; }
.areas { stroke: #e6f4fd; stroke-width: 5px; stroke-linejoin: round; }
.pk { fill: #f1a8ca; }
.pu { fill: #b89bf4; }
.gr { fill: #a5aaaa; }
.rd { fill: #d97575; }
.picked { fill: #c9cfe2; stroke: #e9ecef; stroke-width: 12px; }
```
